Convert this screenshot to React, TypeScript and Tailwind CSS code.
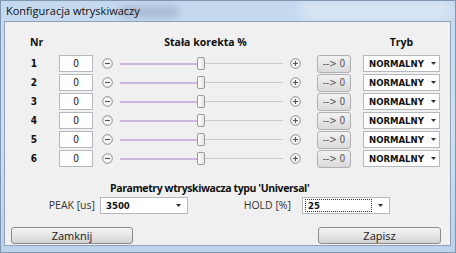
import React from "react";

const rows = [1, 2, 3, 4, 5, 6];

function RoundIcon({ plus }: { plus?: boolean }) {
  return (
    <svg width="11" height="11" viewBox="0 0 11 11" className="shrink-0">
      <circle cx="5.5" cy="5.5" r="4.8" fill="#f7f7f7" stroke="#8a8a8a" strokeWidth="1" />
      <line x1="3" y1="5.5" x2="8" y2="5.5" stroke="#555" strokeWidth="1.1" />
      {plus && <line x1="5.5" y1="3" x2="5.5" y2="8" stroke="#555" strokeWidth="1.1" />}
    </svg>
  );
}

function Arrow() {
  return (
    <svg width="5" height="3" viewBox="0 0 5 3" className="shrink-0">
      <path d="M0 0 H5 L2.5 3 Z" fill="#333" />
    </svg>
  );
}

function Slider() {
  return (
    <div className="relative w-[177px] h-[19px] shrink-0">
      {/* filled part left of the thumb */}
      <div className="absolute left-[7px] top-[9px] w-[81px] h-[2px] bg-[#cbb7df]" />
      <div className="absolute left-[88px] right-[7px] top-[9px] h-[1px] bg-[#c9c9d2]" />
      {/* thumb */}
      <div className="absolute left-[84px] top-[3px] w-[8px] h-[13px] rounded-[2px] border border-[#9a9a9a] bg-gradient-to-r from-[#ffffff] to-[#e4e4e4]" />
    </div>
  );
}

function Combo({ value, width, focus }: { value: string; width: string; focus?: boolean }) {
  return (
    <div className={`${width} h-[17px] shrink-0 flex items-center bg-white border border-[#b5b8bf] pl-[2px] pr-[6px]`}>
      <div
        className={`flex-1 h-[13px] flex items-center pl-[2px] ${
          focus ? "border border-dotted border-[#333]" : "border border-transparent"
        }`}
      >
        <span className="font-['DejaVu_Sans_Condensed','DejaVu_Sans',sans-serif] font-bold text-[9.5px] text-[#111] leading-none">
          {value}
        </span>
      </div>
      <div className="ml-[6px]">
        <Arrow />
      </div>
    </div>
  );
}

function WinButton({ label, width }: { label: string; width: string }) {
  return (
    <div
      className={`${width} h-[17px] rounded-[3px] border border-[#8c8c8c] bg-gradient-to-b from-[#f3f3f3] via-[#e6e6e6] to-[#d2d2d2] flex items-center justify-center text-[11px] text-[#1a1a1a] leading-none`}
    >
      {label}
    </div>
  );
}

export default function App() {
  return (
    <div className="w-[456px] h-[253px] relative overflow-hidden border border-[#7f97b3] bg-gradient-to-b from-[#c4d8ee] via-[#cfe0f3] to-[#bcd2ea] font-['Open_Sans','Noto_Sans',sans-serif]">
      {/* blurred desktop behind the glass */}
      <div className="absolute left-[118px] top-[6px] w-[60px] h-[10px] rounded-full bg-[#94a6c0] blur-[4px] opacity-70" />
      <div className="absolute left-[300px] top-[0px] w-[150px] h-[20px] bg-[#dde9f6] blur-[6px] opacity-80" />

      {/* title bar */}
      <div className="relative h-[20px] flex items-center pl-[5px] text-[11px] text-[#111]">
        Konfiguracja wtryskiwaczy
      </div>

      {/* client area */}
      <div className="relative ml-[3px] mr-[4px] h-[225px] bg-[#f0f0f0] border border-[#8ea2bb] text-[#111]">
        {/* header */}
        <div className="flex items-center h-[14px] mt-[13px] font-bold text-[10.5px] leading-none">
          <div className="w-[54px] shrink-0 pl-[25px]">Nr</div>
          <div className="w-[34px] shrink-0" />
          <div className="ml-[9px] w-[199px] shrink-0 text-center pl-[8px]">Stała korekta %</div>
          <div className="ml-[16px] w-[34px] shrink-0" />
          <div className="ml-[12px] w-[77px] shrink-0 text-center">Tryb</div>
        </div>

        {/* rows */}
        <div className="mt-[5px] flex flex-col">
          {rows.map((n) => (
            <div key={n} className="flex items-center h-[19px]">
              <div className="w-[54px] shrink-0 pl-[24px]">
                <span className="block w-[10px] text-center font-['DejaVu_Sans_Condensed','DejaVu_Sans',sans-serif] font-bold text-[10px] leading-none">
                  {n}
                </span>
              </div>
              <div className="w-[34px] h-[17px] shrink-0 bg-white border border-[#b5b8bf] flex items-center justify-center text-[10px] leading-none font-['DejaVu_Sans_Condensed','DejaVu_Sans',sans-serif]">
                0
              </div>
              <div className="ml-[9px]">
                <RoundIcon />
              </div>
              <Slider />
              <RoundIcon plus />
              <div className="ml-[16px] w-[34px] h-[18px] shrink-0 rounded-[3px] border border-[#b0b0b0] bg-gradient-to-b from-[#f2f2f2] to-[#dadada] flex items-center justify-center text-[10px] text-[#555] leading-none font-['DejaVu_Sans_Condensed','DejaVu_Sans',sans-serif]">
                --&gt; 0
              </div>
              <div className="ml-[12px]">
                <Combo value="NORMALNY" width="w-[77px]" />
              </div>
            </div>
          ))}
        </div>

        {/* universal params */}
        <div className="mt-[13px] h-[14px] flex items-center pl-[105px] font-bold text-[10.5px] tracking-[-0.4px] leading-none">
          Parametry wtryskiwacza typu 'Universal'
        </div>
        <div className="mt-[2px] flex items-center h-[17px] text-[10.5px] leading-none">
          <div className="w-[95px] shrink-0 text-right pr-[5px] text-[#333]">PEAK [us]</div>
          <Combo value="3500" width="w-[88px]" />
          <div className="w-[103px] shrink-0 text-right text-[#333]">HOLD [%]</div>
          <div className="ml-[11px]">
            <Combo value="25" width="w-[88px]" focus />
          </div>
        </div>

        {/* buttons */}
        <div className="mt-[13px] flex items-center justify-between pl-[6px] pr-[9px]">
          <WinButton label="Zamknij" width="w-[122px]" />
          <WinButton label="Zapisz" width="w-[123px]" />
        </div>
      </div>
    </div>
  );
}
